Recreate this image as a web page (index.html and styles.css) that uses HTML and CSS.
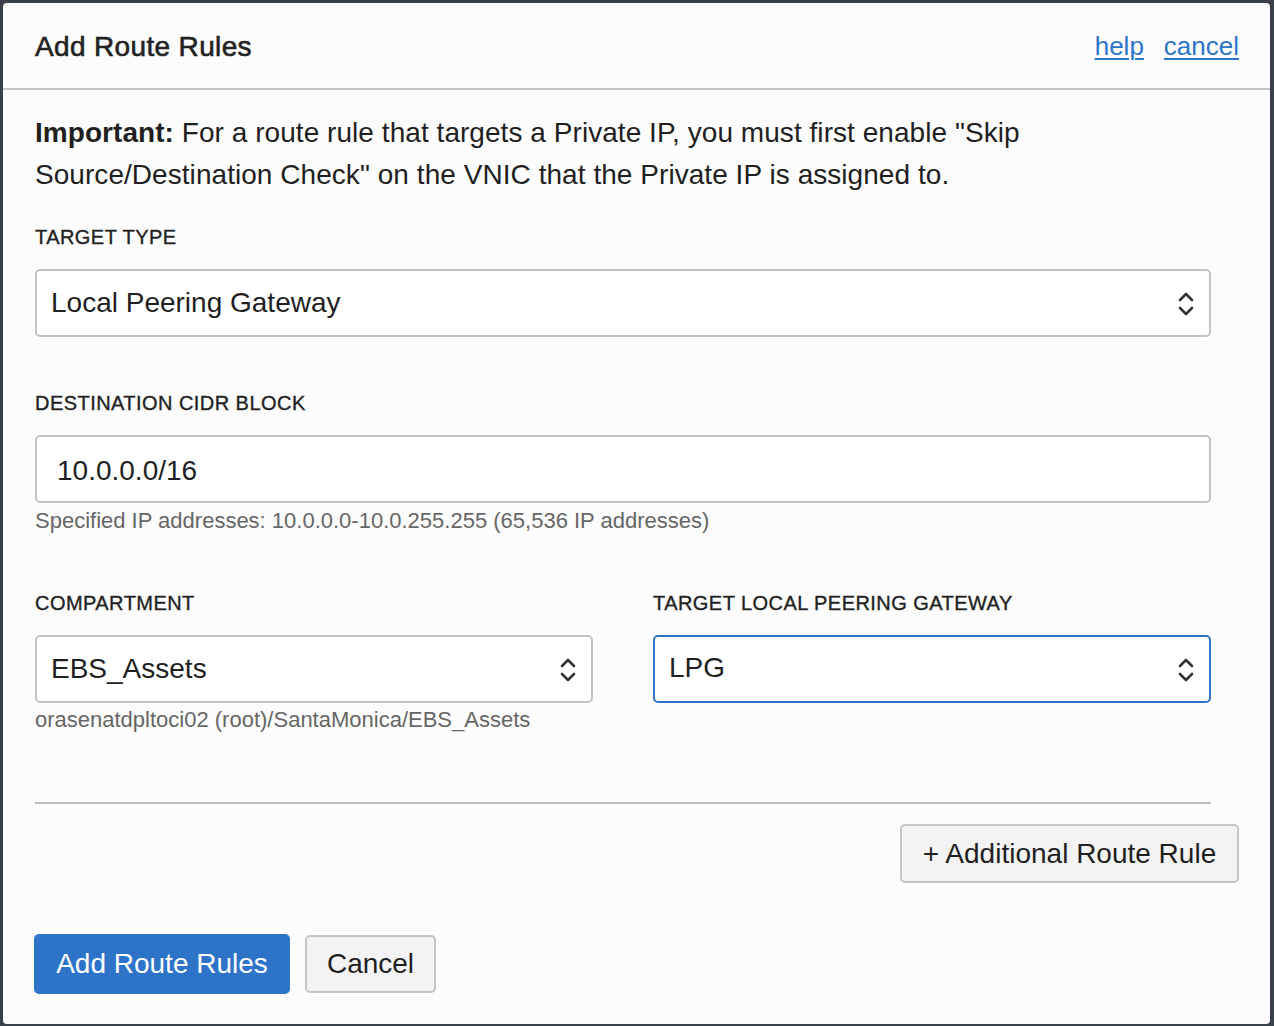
FILE: index.html
```html
<!DOCTYPE html>
<html>
<head>
<meta charset="utf-8">
<link rel="stylesheet" href="styles.css">
</head>
<body>
<div class="dialog">
  <div class="header">
    <h1 class="title">Add Route Rules</h1>
    <div class="links"><a class="link">help</a><a class="link">cancel</a></div>
  </div>
  <div class="content">
    <p class="notice"><strong>Important:</strong> For a route rule that targets a Private IP, you must first enable "Skip Source/Destination Check" on the VNIC that the Private IP is assigned to.</p>
    <div class="fields">
      <div class="field">
        <div class="label">TARGET TYPE</div>
        <div class="select">
          <span class="select-text">Local Peering Gateway</span>
          <svg class="chev" width="16" height="26" viewBox="0 0 16 26"><polyline points="2,9 8,3 14,9" /><polyline points="2,17 8,23 14,17" /></svg>
        </div>
      </div>
      <div class="field field-gap">
        <div class="label">DESTINATION CIDR BLOCK</div>
        <div class="input">10.0.0.0/16</div>
        <div class="help-text">Specified IP addresses: 10.0.0.0-10.0.255.255 (65,536 IP addresses)</div>
      </div>
      <div class="row">
        <div class="field">
          <div class="label">COMPARTMENT</div>
          <div class="select">
            <span class="select-text">EBS_Assets</span>
            <svg class="chev" width="16" height="26" viewBox="0 0 16 26"><polyline points="2,9 8,3 14,9" /><polyline points="2,17 8,23 14,17" /></svg>
          </div>
          <div class="help-text help-tight">orasenatdpltoci02 (root)/SantaMonica/EBS_Assets</div>
        </div>
        <div class="field">
          <div class="label">TARGET LOCAL PEERING GATEWAY</div>
          <div class="select select-focus">
            <span class="select-text">LPG</span>
            <svg class="chev" width="16" height="26" viewBox="0 0 16 26"><polyline points="2,9 8,3 14,9" /><polyline points="2,17 8,23 14,17" /></svg>
          </div>
        </div>
      </div>
      <div class="divider"></div>
    </div>
    <div class="add-row">
      <button class="btn btn-secondary btn-add">+ Additional Route Rule</button>
    </div>
    <div class="actions">
      <button class="btn btn-primary">Add Route Rules</button>
      <button class="btn btn-secondary btn-cancel">Cancel</button>
    </div>
  </div>
</div>
</body>
</html>
```

FILE: styles.css
```css
html, body {
  margin: 0;
  padding: 0;
}
body {
  background: #3a4047;
  font-family: "Liberation Sans", Arial, sans-serif;
  color: #1f1f1f;
  width: 1274px;
  height: 1026px;
  overflow: hidden;
  padding-top: 3px;
  padding-left: 3px;
  box-sizing: border-box;
}
.dialog {
  width: 1267px;
  height: 1021px;
  background: #fcfcfc;
  border-radius: 4px;
  box-sizing: border-box;
}
.header {
  height: 87px;
  box-sizing: border-box;
  padding: 3px 31px 0 32px;
  display: flex;
  align-items: center;
  justify-content: space-between;
  border-bottom: 2px solid #c2c5c8;
}
.title {
  margin: 0;
  font-size: 28px;
  font-weight: normal;
  -webkit-text-stroke: 0.6px #222;
  color: #222;
  letter-spacing: 0.35px;
}
.links {
  display: flex;
  gap: 20px;
  margin-top: -2px;
}
.link {
  font-size: 26px;
  color: #2d74c9;
  text-decoration: underline;
  text-decoration-thickness: 1.5px;
  text-underline-offset: 3px;
  cursor: pointer;
}
.content {
  padding: 22px 31px 0 32px;
}
.notice {
  margin: 0;
  font-size: 28px;
  line-height: 42px;
  color: #1f1f1f;
  width: 1190px;
  letter-spacing: 0.05px;
}
.notice strong {
  font-weight: bold;
}
.fields {
  width: 1176px;
}
.field {
  display: flex;
  flex-direction: column;
}
.fields > .field:first-child {
  margin-top: 29px;
}
.field-gap {
  margin-top: 54px;
}
.label {
  font-size: 20px;
  line-height: 24px;
  color: #222;
  -webkit-text-stroke: 0.35px #222;
  letter-spacing: 0.45px;
  margin-bottom: 20px;
}
.select, .input {
  height: 68px;
  box-sizing: border-box;
  border: 2px solid #c0c4c8;
  border-radius: 5px;
  background: #fff;
  display: flex;
  align-items: center;
  font-size: 28px;
  color: #1f1f1f;
}
.select {
  justify-content: space-between;
  padding: 0 15px 0 14px;
}
.select-focus {
  border-color: #2d74c9;
}
.select-focus .select-text {
  margin-top: -3px;
}
.input {
  padding: 3px 0 0 20px;
}
.chev {
  display: block;
  margin-top: 2px;
}
.chev polyline {
  fill: none;
  stroke: #333;
  stroke-width: 2.6;
  stroke-linecap: round;
  stroke-linejoin: round;
}
.help-text {
  font-size: 22px;
  line-height: 26px;
  color: #666;
  margin-top: 5px;
}
.help-tight {
  margin-top: 4px;
}
.row {
  display: grid;
  grid-template-columns: 558px 558px;
  column-gap: 60px;
  margin-top: 57px;
}
.divider {
  height: 2px;
  background: #bcc0c4;
  margin-top: 69px;
}
.add-row {
  display: flex;
  justify-content: flex-end;
  margin-top: 20px;
}
.btn {
  font-family: "Liberation Sans", Arial, sans-serif;
  font-size: 28px;
  border-radius: 5px;
  box-sizing: border-box;
  cursor: pointer;
  margin: 0;
}
.btn-secondary {
  background: #f3f3f3;
  border: 2px solid #c3c6c9;
  color: #1f1f1f;
}
.btn-add {
  width: 339px;
  height: 59px;
  padding: 0;
}
.actions {
  display: flex;
  align-items: center;
  gap: 15px;
  margin-top: 51px;
  margin-left: -1px;
}
.btn-primary {
  background: #2d74c9;
  border: none;
  color: #fff;
  width: 256px;
  height: 60px;
  padding: 0;
}
.btn-cancel {
  width: 131px;
  height: 58px;
  padding: 0;
}
```
